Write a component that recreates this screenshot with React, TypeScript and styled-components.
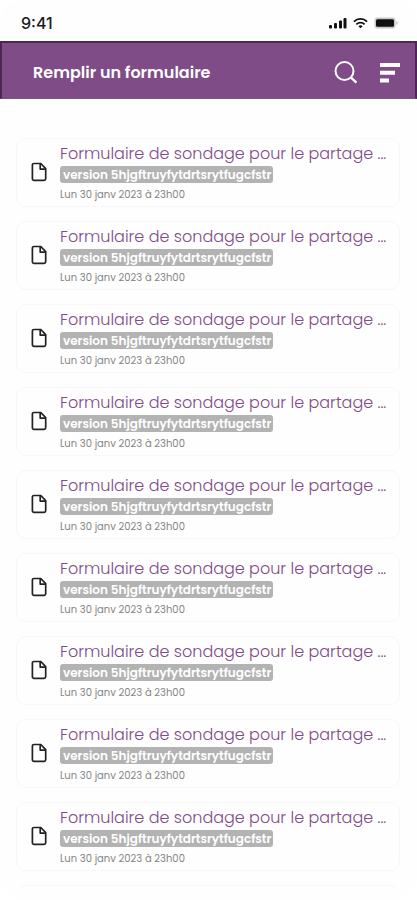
import React from "react";
import styled, { createGlobalStyle } from "styled-components";

const GlobalStyle = createGlobalStyle`
  *, *::before, *::after { box-sizing: border-box; }
  body {
    margin: 0;
    background: #ffffff;
    font-family: Poppins, Inter, "Liberation Sans", sans-serif;
  }
`;

const Screen = styled.div`
  min-height: 100vh;
  display: flex;
  flex-direction: column;
  background: #fefefe;
  border-radius: 24px;
  overflow: hidden;
`;

const StatusBar = styled.div`
  height: 41px;
  padding: 4px 19px 0 21px;
  display: flex;
  align-items: center;
  justify-content: space-between;
  color: #1c1c1c;
  font-family: Inter, "Liberation Sans", sans-serif;
  font-size: 16px;
  font-weight: 500;
`;

const StatusIcons = styled.div`
  display: flex;
  align-items: center;
  gap: 6px;
`;

const Header = styled.header`
  height: 58px;
  padding: 4px 15px 0 31px;
  display: flex;
  align-items: center;
  justify-content: space-between;
  background: #804c87;
  border: 2px solid #4b2752;
  border-bottom: 1px solid #76597a;
  color: #ffffff;
`;

const Heading = styled.h1`
  margin: 0;
  font-size: 16px;
  line-height: 24px;
  font-weight: 600;
`;

const Actions = styled.div`
  display: flex;
  align-items: center;
  gap: 22px;
`;

const IconButton = styled.button`
  display: flex;
  padding: 0;
  border: 0;
  background: none;
  color: inherit;
  cursor: pointer;
`;

const List = styled.ul`
  list-style: none;
  margin: 0;
  padding: 39px 17px 0 16px;
  display: flex;
  flex-direction: column;
  flex: 1;
  gap: 14px;
`;

const Card = styled.li`
  height: 69px;
  padding: 5px 12px 0 14px;
  display: flex;
  gap: 13px;
  border: 1px solid #f7f7f7;
  border-radius: 10px;
`;

const NextCardEdge = styled.div`
  height: 14px;
  border-top: 1px solid #f7f7f7;
  border-radius: 10px 10px 0 0;
`;

const FileIcon = styled.svg`
  flex: none;
  margin-top: 18px;
`;

const Details = styled.div`
  flex: 1;
  min-width: 0;
  display: flex;
  flex-direction: column;
  align-items: flex-start;
  white-space: nowrap;
`;

const Title = styled.a`
  color: #804c87;
  font-size: 16px;
  line-height: 20px;
  font-weight: 300;
  text-decoration: none;
`;

const Version = styled.span`
  margin-top: 2px;
  padding: 0 2px 0 3px;
  border-radius: 3px;
  background: #b3b3b3;
  color: #ffffff;
  font-size: 12px;
  line-height: 17px;
  font-weight: 600;
`;

const DateText = styled.time`
  margin-top: 5px;
  color: #858585;
  font-size: 10px;
  line-height: 14px;
  font-weight: 400;
`;

const forms = Array.from({ length: 9 }, (_, id) => ({
  id,
  title: "Formulaire de sondage pour le partage ...",
  version: "version 5hjgftruyfytdrtsrytfugcfstr",
  date: "Lun 30 janv 2023 à 23h00",
}));

function Signal() {
  return (
    <svg width="18" height="12" viewBox="0 0 18 12" fill="#111" aria-hidden="true">
      <rect x="0" y="8" width="3" height="3.5" rx="1" />
      <rect x="5" y="6" width="3" height="5.5" rx="1" />
      <rect x="10" y="3.5" width="3" height="8" rx="1" />
      <rect x="14.5" y="1" width="3" height="10.5" rx="1" />
    </svg>
  );
}

function Wifi() {
  return (
    <svg width="15" height="12" viewBox="0 0 16 12" fill="none" stroke="#111" strokeWidth="2" aria-hidden="true">
      <path d="M1 4.5a10 10 0 0 1 14 0" />
      <path d="M3.6 7.4a6.3 6.3 0 0 1 8.8 0" />
      <path d="M5.8 9.4a3.2 3.2 0 0 1 4.4 0L8 11.7Z" fill="#111" stroke="none" />
    </svg>
  );
}

function Battery() {
  return (
    <svg width="24" height="12" viewBox="0 0 24 12" aria-hidden="true">
      <rect x="0.5" y="0.5" width="21" height="11" rx="3" fill="#c8c8c8" />
      <rect x="2" y="2.3" width="18" height="7.4" rx="1.5" fill="#111" />
      <path d="M22.4 4v4c1.6-.7 1.6-3.3 0-4Z" fill="#b4b4b4" />
    </svg>
  );
}

function SearchIcon() {
  return (
    <svg width="24" height="24" viewBox="0 0 24 24" fill="none" stroke="currentColor" strokeWidth="2" aria-hidden="true">
      <circle cx="10.5" cy="10" r="9" />
      <path d="m16.8 16.4 5.6 5.2" strokeWidth="2.3" />
    </svg>
  );
}

function FilterIcon() {
  return (
    <svg width="20" height="20" viewBox="0 0 20 20" fill="currentColor" aria-hidden="true">
      <path d="M0 0h20v4H0zM0 7.7h15v4H0zM0 15.4h9v4H0z" />
    </svg>
  );
}

export default function App() {
  return (
    <>
      <GlobalStyle />
      <Screen>
        <StatusBar>
          <span>9:41</span>
          <StatusIcons>
            <Signal />
            <Wifi />
            <Battery />
          </StatusIcons>
        </StatusBar>
        <Header>
          <Heading>Remplir un formulaire</Heading>
          <Actions>
            <IconButton type="button" aria-label="Rechercher">
              <SearchIcon />
            </IconButton>
            <IconButton type="button" aria-label="Filtrer">
              <FilterIcon />
            </IconButton>
          </Actions>
        </Header>
        <List>
          {forms.map((form) => (
            <Card key={form.id}>
              <FileIcon width="16" height="20" viewBox="0 0 16 20" fill="none" stroke="#222" strokeWidth="1.7" strokeLinejoin="round" aria-hidden="true">
                <path d="M3 1.5h6.8l4.9 5.2v10.1c0 .9-.7 1.6-1.6 1.6H3c-.9 0-1.6-.7-1.6-1.6V3.1c0-.9.7-1.6 1.6-1.6Z" />
                <path d="M9.2 1.7v5.4h5.3" />
              </FileIcon>
              <Details>
                <Title href="#">{form.title}</Title>
                <Version>{form.version}</Version>
                <DateText dateTime="2023-01-30T23:00">{form.date}</DateText>
              </Details>
            </Card>
          ))}
          <li>
            <NextCardEdge />
          </li>
        </List>
      </Screen>
    </>
  );
}
